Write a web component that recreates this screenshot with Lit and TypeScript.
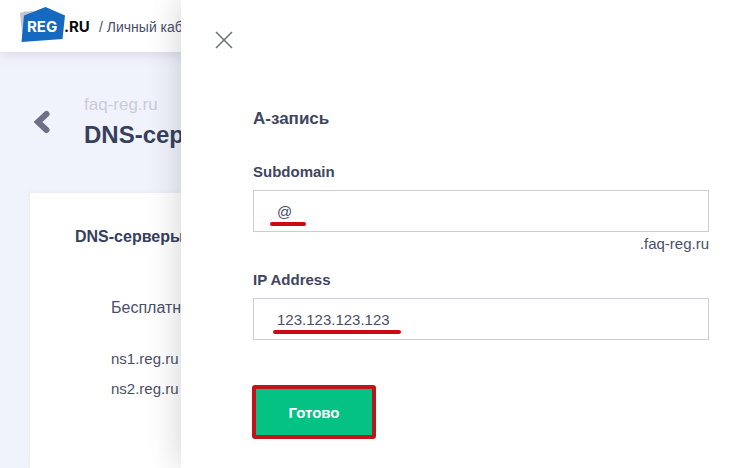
import { LitElement, html, css } from "lit";
import { customElement } from "lit/decorators.js";

@customElement("site-logo")
class SiteLogo extends LitElement {
  static styles = css`
    :host { display: block; }
    .logo { display: block; }
    .name { font: 700 15px/1 Inter, sans-serif; }
    .reg { fill: #fff; }
    .ru { fill: #0b0b0f; }
  `;
  render() {
    return html`
      <svg class="logo" width="74" height="38" viewBox="0 0 74 38" role="img" aria-label="REG.RU">
        <path d="M0 6 L5 4.500 L22 4 V30 L2.500 31 Z" fill="#c3c6d2" />
        <path d="M4 8.500 L25.500 0 L45 8.500 L42.500 32 L1.500 35 Z" fill="#1569be" />
        <text class="name reg" x="7" y="25">REG</text>
        <text class="name ru" x="44" y="25">.RU</text>
      </svg>
    `;
  }
}

@customElement("account-page")
class AccountPage extends LitElement {
  static styles = css`
    :host { display: flex; flex-direction: column; min-height: 100vh; overflow: hidden; white-space: nowrap; }
    .top { display: flex; align-items: center; gap: 5px; height: 52px; padding: 0 20px; box-sizing: border-box;
      background: #fff; box-shadow: 0 0 14px rgba(40, 45, 80, 0.18); }
    .crumb { font-size: 14px; line-height: 20px; color: #4a4f68; padding-top: 2px; }
    .head { display: flex; align-items: center; gap: 33px; padding: 43px 33px 38px; }
    .back { display: block; padding-bottom: 6px; }
    .domain { display: block; font-size: 17px; line-height: 20px; color: #c9ccd8; text-decoration: none; }
    .title { margin: 0; font-size: 24px; line-height: 40px; color: #36405c; }
    .card { flex: 1; margin-left: 30px; padding: 32px 45px; background: #fff; box-shadow: 0 0 6px rgba(60, 65, 110, 0.06); }
    .sub { margin: 0; font-size: 16px; line-height: 24px; color: #36405c; }
    .list { padding: 47px 36px 0; }
    .kind { margin: 0 0 24px; font-size: 16px; line-height: 24px; }
    .servers { margin: 0; padding: 0; list-style: none; font-size: 15px; line-height: 30px; }
  `;
  render() {
    return html`
      <header class="top">
        <site-logo></site-logo>
        <span class="crumb">/ Личный кабинет</span>
      </header>
      <div class="head">
        <svg class="back" width="18" height="26" viewBox="0 0 18 26" aria-hidden="true">
          <path d="M13.500 5 L5 13 L13.500 21" fill="none" stroke="#6c6f86" stroke-width="6" stroke-linecap="round" stroke-linejoin="miter" />
        </svg>
        <div>
          <a class="domain" href="#domain">faq-reg.ru</a>
          <h1 class="title">DNS-серверы</h1>
        </div>
      </div>
      <section class="card">
        <h2 class="sub">DNS-серверы</h2>
        <div class="list">
          <p class="kind">Бесплатные</p>
          <ul class="servers">
            <li>ns1.reg.ru</li>
            <li>ns2.reg.ru</li>
          </ul>
        </div>
      </section>
    `;
  }
}

@customElement("record-form")
class RecordForm extends LitElement {
  static styles = css`
    :host { display: block; box-sizing: border-box; padding: 28px 29px 28px 72px; background: #fff;
      box-shadow: 0 0 32px rgba(20, 20, 30, 0.2); }
    .close { display: block; width: 24px; height: 24px; margin: 0 0 55px -41px; padding: 0; border: 0; background: none; }
    .close svg { display: block; }
    .title { margin: 0; font-size: 17px; line-height: 24px; color: #3f455f; }
    .label { display: block; font-size: 15px; font-weight: 700; line-height: 20px; color: #3f455f; }
    .first { margin-top: 31px; }
    .second { margin-top: 16px; }
    .box { position: relative; margin-top: 8px; }
    .input { display: block; width: 100%; height: 42px; box-sizing: border-box; padding: 0 23px;
      border: 1px solid #cbced3; border-radius: 0; background: #fff; font: inherit; font-size: 15px; color: #4a4f68; outline: none; }
    .mark { position: absolute; left: 17px; bottom: 6px; width: 36px; height: 4px; border-radius: 2px; background: #cc0a14; }
    .box .long { left: 20px; width: 128px; }
    .suffix { display: block; text-align: right; font-size: 15px; line-height: 20px; padding-top: 2px; }
    .submit { display: block; margin: 45px 0 0 -1px; width: 124px; height: 54px; border: 4px solid #c0141a; border-radius: 3px;
      background: #04c184; color: #fff; font: inherit; font-size: 15px; font-weight: 700; }
  `;
  render() {
    return html`
      <form>
        <button class="close" type="button" aria-label="Закрыть">
          <svg width="24" height="24" viewBox="0 0 24 24"><path d="M4 4 L20 20 M20 4 L4 20" stroke="#686b78" stroke-width="1.500" /></svg>
        </button>
        <h2 class="title">А-запись</h2>
        <label class="label first" for="sub">Subdomain</label>
        <div class="box">
          <input class="input" id="sub" type="text" value="@" />
          <span class="mark"></span>
        </div>
        <span class="suffix">.faq-reg.ru</span>
        <label class="label second" for="ip">IP Address</label>
        <div class="box">
          <input class="input" id="ip" type="text" value="123.123.123.123" />
          <span class="mark long"></span>
        </div>
        <button class="submit" type="button">Готово</button>
      </form>
    `;
  }
}

@customElement("app-root")
class AppRoot extends LitElement {
  static styles = css`
    :host { display: block; position: relative; min-height: 100vh; overflow: hidden; background: #f1f3fc;
      font-family: "Liberation Sans", Arial, sans-serif; color: #4a4f68; }
    .panel { position: absolute; top: 0; bottom: 0; right: 0; left: 181px; }
  `;
  render() {
    return html`
      <account-page></account-page>
      <record-form class="panel"></record-form>
    `;
  }
}
